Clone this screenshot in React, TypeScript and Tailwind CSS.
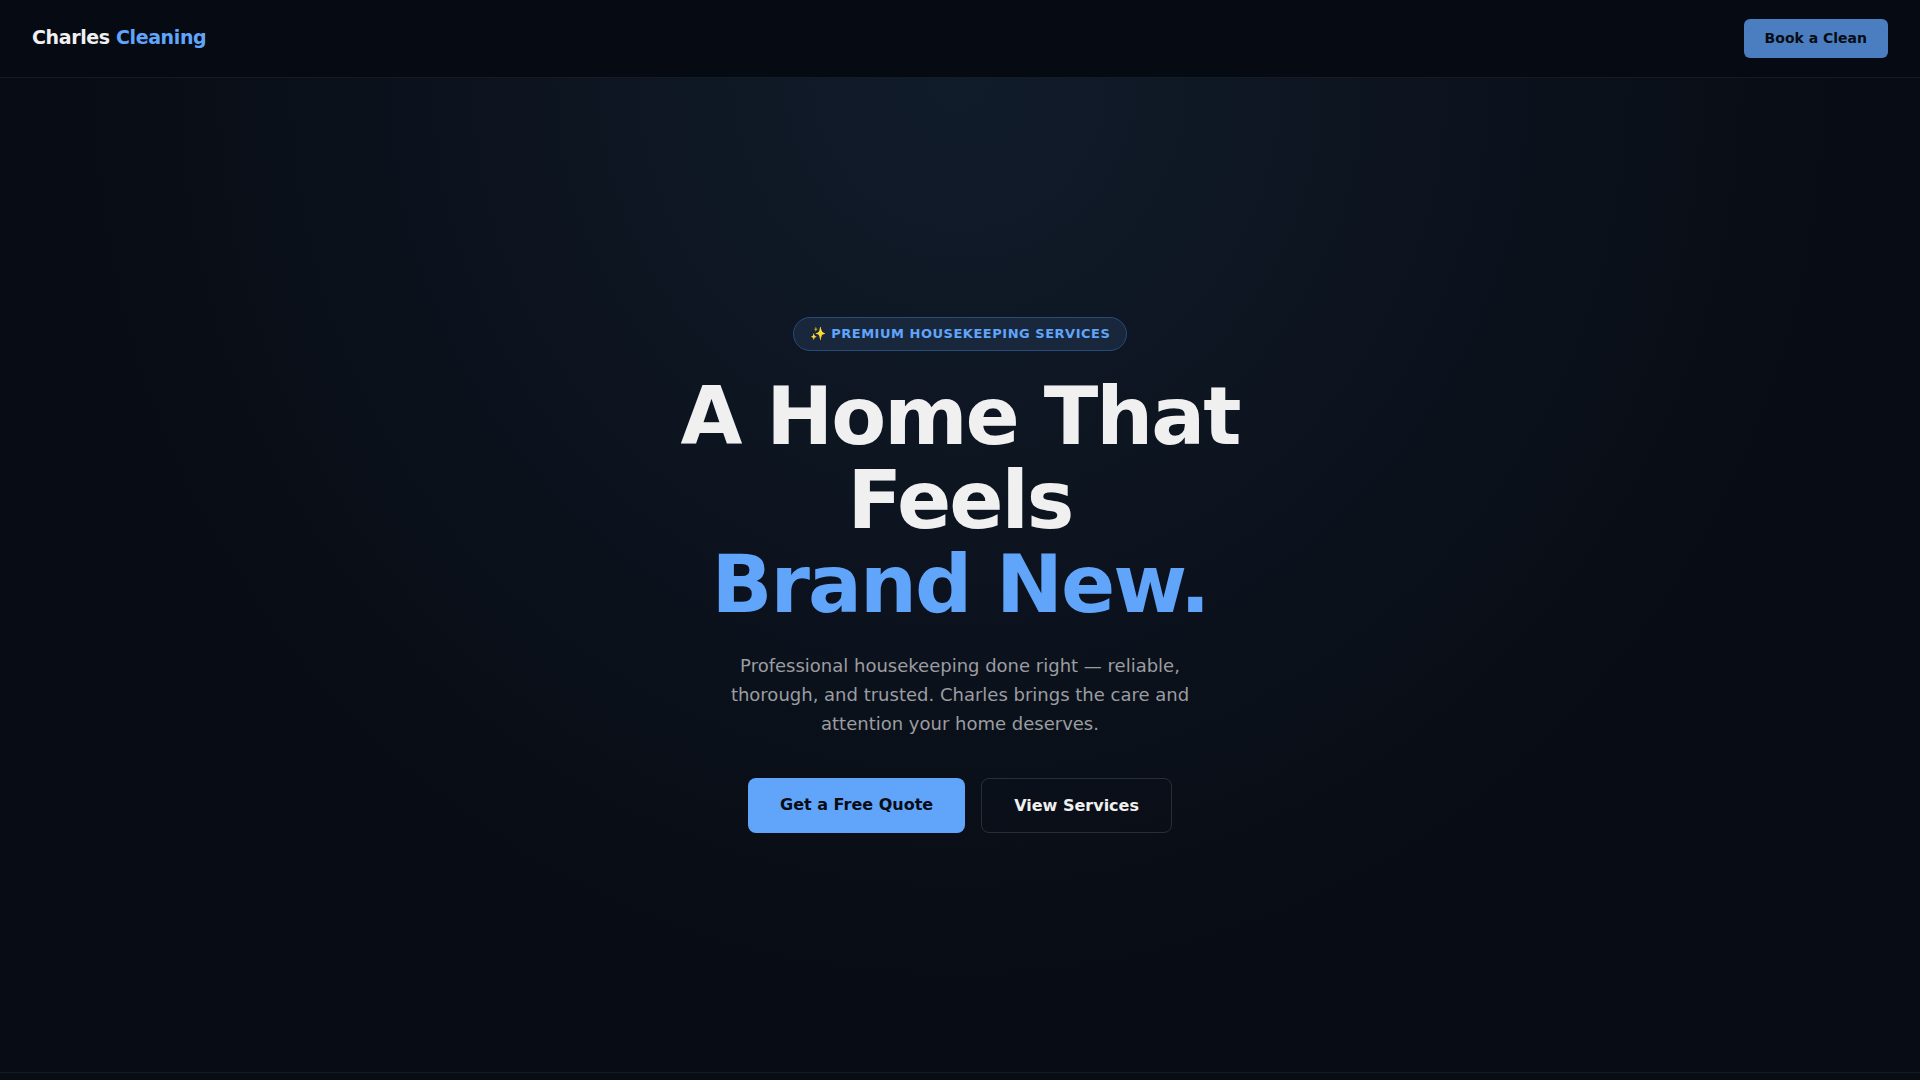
function Navbar() {
  return (
    <header className="sticky top-0 z-10 flex items-start justify-between border-b border-[#161a22] bg-[#060a12] px-8 py-[19px]">
      <a href="#top" className="text-[19px] leading-9 font-bold tracking-[-0.02em] text-[#f0f0f0]">
        Charles <span className="text-[#60a5fa]">Cleaning</span>
      </a>
      <a href="#contact" className="rounded-md bg-[#4b7ec0] px-[21px] py-2 text-sm leading-[23px] font-bold text-[#080c14]">
        Book a Clean
      </a>
    </header>
  );
}

function Hero() {
  return (
    <section
      id="top"
      className="flex min-h-[92vh] flex-col items-center justify-center bg-[radial-gradient(ellipse_at_50%_0%,#111c2b_0%,#080c14_65%)] px-6 py-20 text-center"
    >
      <div className="mb-6 rounded-full border border-[#2a4a78] bg-[#19273d] px-4 py-1.5 text-[13px] leading-5 font-semibold tracking-[0.04em] text-[#60a5fa] uppercase">
        ✨ Premium Housekeeping Services
      </div>
      <h1 className="mb-6 max-w-[700px] text-[80px] leading-[84px] font-extrabold tracking-tight text-[#f0f0f0]">
        A Home That Feels
        <br />
        <span className="text-[#60a5fa]">Brand New.</span>
      </h1>
      <p className="mb-10 max-w-[480px] text-lg leading-[29px] text-[#9b9da1]">
        Professional housekeeping done right — reliable, thorough, and trusted. Charles brings the care and attention
        your home deserves.
      </p>
      <div className="flex flex-wrap justify-center gap-4">
        <a href="#contact" className="rounded-lg bg-[#60a5fa] px-8 py-3.5 text-base leading-[25px] font-bold text-[#080c14]">
          Get a Free Quote
        </a>
        <a
          href="#services"
          className="rounded-lg border border-[#2b2e37] px-8 py-3.5 text-base leading-[25px] font-semibold text-[#f0f0f0]"
        >
          View Services
        </a>
      </div>
    </section>
  );
}

export default function App() {
  return (
    <div className="min-h-screen bg-[#080c14] font-['DejaVu_Sans',sans-serif]">
      <Navbar />
      <Hero />
      <div className="border-t border-[#161a22]" />
    </div>
  );
}
